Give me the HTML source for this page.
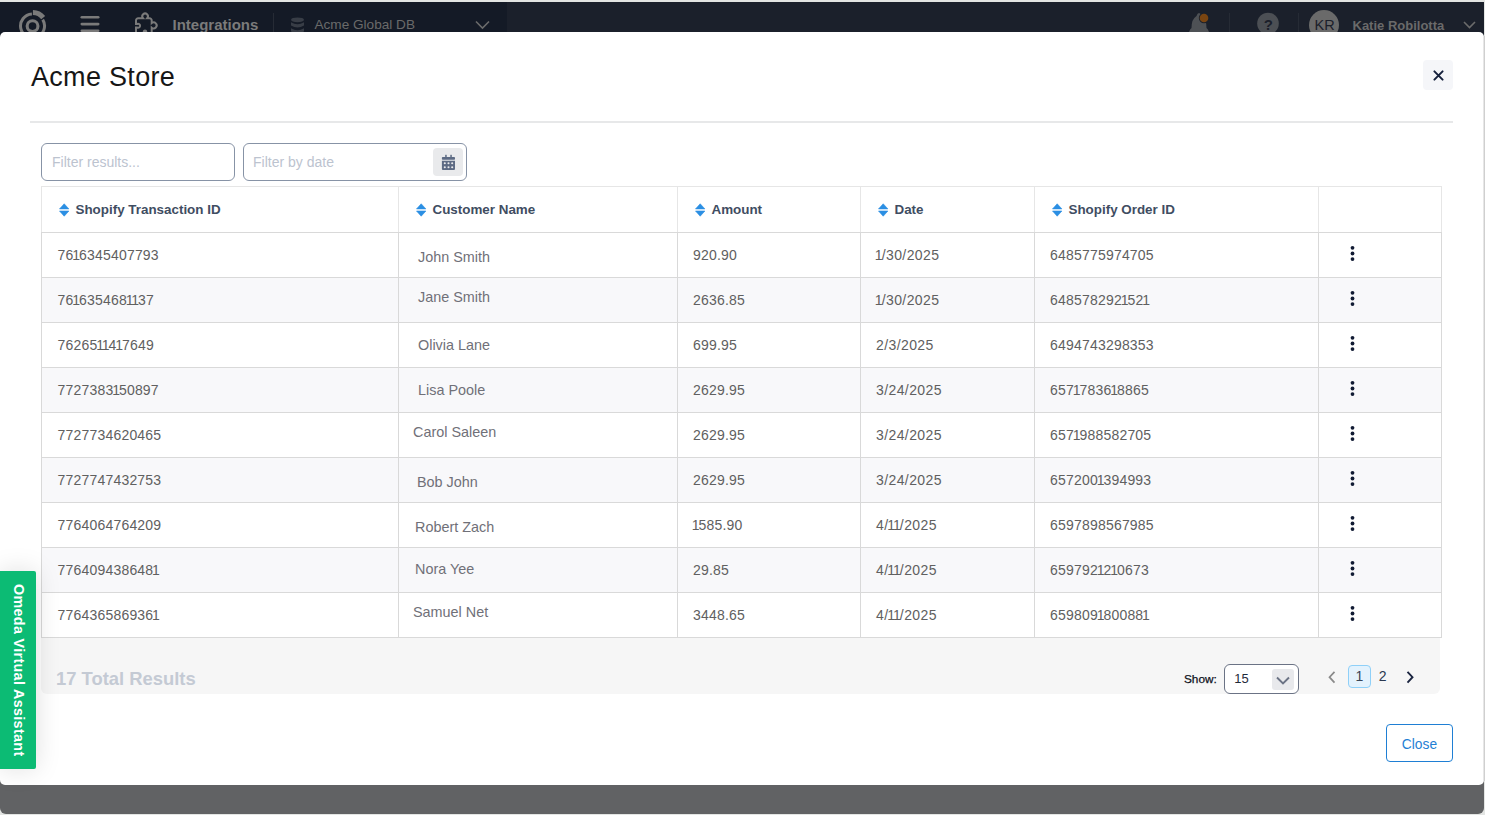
<!DOCTYPE html>
<html><head><meta charset="utf-8">
<style>
*{box-sizing:border-box;margin:0;padding:0}
html,body{width:1485px;height:815px;overflow:hidden;background:#e3e5e3;font-family:"Liberation Sans",sans-serif}
.a{position:absolute}
.t{position:absolute;white-space:nowrap}
.o{margin:0 -1.25px}
</style></head>
<body>
<div class="a" style="left:0;top:2px;width:1484px;height:40px;background:#141a26"></div>
<div class="a" style="left:507px;top:2px;width:977px;height:40px;background:#1b202b"></div>
<div class="a" style="left:0;top:760px;width:1483.6px;height:53.6px;background:#616264;border-radius:0 0 6px 6px"></div>
<svg class="a" style="left:0;top:0" width="1485" height="40">
 <g fill="none" stroke="#7a7a7a">
  <circle cx="32.55" cy="26.1" r="5.4" stroke-width="3.1"/>
  <path d="M 42.7 19.6 A 12 12 0 1 1 31.9 14.0" stroke-width="3"/>
  <path d="M 32.9 12.5 A 13.5 13.5 0 0 1 43.2 17.6" stroke-width="5"/>
 </g>
 <g fill="#7a7a7a">
  <rect x="80.5" y="16" width="19" height="2.6" rx="1.3"/>
  <rect x="80.5" y="22.8" width="19" height="2.6" rx="1.3"/>
  <rect x="80.5" y="29.5" width="19" height="2.6" rx="1.3"/>
 </g>
 <path d="M136 34 V27.6 h1.2 a2 2 0 1 0 0 -3.6 h-1.2 V20.4 a2.2 2.2 0 0 1 2.2 -2.2 H143 a2.8 2.8 0 1 1 4.2 0 h2.3 a2.2 2.2 0 0 1 2.2 2.2 V23.1 a3 3 0 1 1 0 4.6 V34" fill="none" stroke="#7a7a7a" stroke-width="2"/>
 <circle cx="145" cy="31.6" r="2.2" fill="#7a7a7a"/>
 <line x1="273.5" y1="13" x2="273.5" y2="40" stroke="#262b35" stroke-width="1"/>
 <g fill="#383d46">
  <ellipse cx="297.5" cy="19.8" rx="6.5" ry="2.4"/>
  <path d="M291 22.3 q6.5 4 13 0 v3.3 q-6.5 4 -13 0z"/>
  <path d="M291 28.2 q6.5 4 13 0 v3.3 q-6.5 4 -13 0z"/>
 </g>
 <path d="M476 21.5 l6.5 6.5 l6.5 -6.5" fill="none" stroke="#6b6b6b" stroke-width="1.6"/>
 <path d="M1189 32 q1 -3 2.5 -4 q0 -9 5 -12 q1 -3 2.5 -3 q1.5 0 2.5 3 q5 3 5 12 q1.5 1 2.5 4z" fill="#4e5155"/>
 <circle cx="1204" cy="18" r="5.2" fill="#1b202b"/>
 <circle cx="1204" cy="18" r="4.3" fill="#7a4511"/>
 <line x1="1229.5" y1="13" x2="1229.5" y2="40" stroke="#262b35" stroke-width="1"/>
 <circle cx="1268" cy="23.5" r="10.8" fill="#4c4f54"/>
 <line x1="1298.5" y1="13" x2="1298.5" y2="40" stroke="#262b35" stroke-width="1"/>
 <circle cx="1324" cy="25" r="15" fill="#6a6a6a"/>
 <path d="M1464 22 l5.5 5.5 l5.5 -5.5" fill="none" stroke="#6b6b6b" stroke-width="1.6"/>
</svg>
<div class="t" style="left:172.5px;top:16.90px;font-size:15px;line-height:15px;font-weight:bold;color:#7b7b7b">Integrations</div>
<div class="t" style="left:314.5px;top:18.29px;font-size:13.6px;line-height:13.6px;color:#6a6a6a">Acme Global DB</div>
<div class="t" style="left:1263.8px;top:16.90px;font-size:15px;line-height:15px;font-weight:bold;color:#1b202b">?</div>
<div class="t" style="left:1314.5px;top:17.73px;font-size:14.5px;line-height:14.5px;color:#1b202b">KR</div>
<div class="t" style="left:1352.5px;top:19.00px;font-size:13.0px;line-height:13.0px;font-weight:bold;color:#6a6a6a">Katie Robilotta</div>
<div class="a" style="left:0;top:32px;width:1483.6px;height:753px;background:#fff;border-radius:5px"></div>
<div class="t" style="left:31px;top:64.14px;font-size:27px;line-height:27px;color:#161616;letter-spacing:0.3px">Acme Store</div>
<div class="a" style="left:30px;top:121px;width:1423px;height:2px;background:#e7e8e9"></div>
<div class="a" style="left:1423px;top:60px;width:30px;height:30px;background:#f5f6f9;border-radius:4px"></div>
<svg class="a" style="left:1423px;top:60px" width="30" height="30"><path d="M11.4 11.4 L19.6 19.6 M19.6 11.4 L11.4 19.6" stroke="#15203c" stroke-width="2" stroke-linecap="round"/></svg>
<div class="a" style="left:41px;top:143px;width:194px;height:38px;border:1.5px solid #8793a6;border-radius:6px;background:#fff"></div>
<div class="t" style="left:52px;top:155.15px;font-size:14px;line-height:14px;color:#bcc3cf">Filter results...</div>
<div class="a" style="left:243px;top:143px;width:224px;height:38px;border:1.5px solid #8793a6;border-radius:6px;background:#fff"></div>
<div class="t" style="left:253px;top:155.15px;font-size:14px;line-height:14px;color:#bcc3cf">Filter by date</div>
<div class="a" style="left:433px;top:148px;width:30px;height:28px;background:#e9eaec;border-radius:4px"></div>
<svg class="a" style="left:433px;top:148px" width="30" height="28">
 <g fill="#5d6b84">
  <rect x="8.9" y="9" width="13.1" height="2.8" rx="0.8"/>
  <rect x="12.2" y="6.8" width="1.5" height="3"/>
  <rect x="17.3" y="6.8" width="1.5" height="3"/>
  <path d="M8.9 12.7 h13.1 v8.2 a1.1 1.1 0 0 1 -1.1 1.1 h-10.9 a1.1 1.1 0 0 1 -1.1 -1.1z"/>
 </g>
 <g fill="#e9eaec">
  <circle cx="11.8" cy="15.3" r="1.05"/><circle cx="15.5" cy="15.3" r="1.05"/><circle cx="19.2" cy="15.3" r="1.05"/>
  <circle cx="11.8" cy="19.3" r="1.05"/><circle cx="15.5" cy="19.3" r="1.05"/><circle cx="19.2" cy="19.3" r="1.05"/>
 </g>
</svg>
<div class="a" style="left:41px;top:186px;width:1401px;height:46px;border:1px solid #e6e6e6;border-bottom:none"></div>
<div class="a" style="left:41px;top:232px;width:1401px;height:46px;background:#fff;border:1px solid #d9d9d9;border-bottom:1px solid #d9d9d9"></div>
<div class="a" style="left:41px;top:277px;width:1401px;height:46px;background:#f8f8fa;border:1px solid #d9d9d9;border-bottom:1px solid #d9d9d9"></div>
<div class="a" style="left:41px;top:322px;width:1401px;height:46px;background:#fff;border:1px solid #d9d9d9;border-bottom:1px solid #d9d9d9"></div>
<div class="a" style="left:41px;top:367px;width:1401px;height:46px;background:#f8f8fa;border:1px solid #d9d9d9;border-bottom:1px solid #d9d9d9"></div>
<div class="a" style="left:41px;top:412px;width:1401px;height:46px;background:#fff;border:1px solid #d9d9d9;border-bottom:1px solid #d9d9d9"></div>
<div class="a" style="left:41px;top:457px;width:1401px;height:46px;background:#f8f8fa;border:1px solid #d9d9d9;border-bottom:1px solid #d9d9d9"></div>
<div class="a" style="left:41px;top:502px;width:1401px;height:46px;background:#fff;border:1px solid #d9d9d9;border-bottom:1px solid #d9d9d9"></div>
<div class="a" style="left:41px;top:547px;width:1401px;height:46px;background:#f8f8fa;border:1px solid #d9d9d9;border-bottom:1px solid #d9d9d9"></div>
<div class="a" style="left:41px;top:592px;width:1401px;height:46px;background:#fff;border:1px solid #d9d9d9;border-bottom:1px solid #d9d9d9"></div>
<div class="a" style="left:398px;top:186px;width:1px;height:46px;background:#e6e6e6"></div>
<div class="a" style="left:398px;top:232px;width:1px;height:406px;background:#d9d9d9"></div>
<div class="a" style="left:677px;top:186px;width:1px;height:46px;background:#e6e6e6"></div>
<div class="a" style="left:677px;top:232px;width:1px;height:406px;background:#d9d9d9"></div>
<div class="a" style="left:860px;top:186px;width:1px;height:46px;background:#e6e6e6"></div>
<div class="a" style="left:860px;top:232px;width:1px;height:406px;background:#d9d9d9"></div>
<div class="a" style="left:1034px;top:186px;width:1px;height:46px;background:#e6e6e6"></div>
<div class="a" style="left:1034px;top:232px;width:1px;height:406px;background:#d9d9d9"></div>
<div class="a" style="left:1318px;top:186px;width:1px;height:46px;background:#e6e6e6"></div>
<div class="a" style="left:1318px;top:232px;width:1px;height:406px;background:#d9d9d9"></div>
<svg class="a" style="left:59px;top:203px" width="11" height="15"><path d="M5.2 0.8 L9.9 5.9 H0.5Z M0.5 8.0 H9.9 L5.2 13.2Z" fill="#2b8fe3" stroke="#2b8fe3" stroke-width="0.6" stroke-linejoin="round"/></svg>
<div class="t" style="left:75.5px;top:202.66px;font-size:13.4px;line-height:13.4px;font-weight:bold;color:#3f4d62">Shopify Transaction ID</div>
<svg class="a" style="left:416px;top:203px" width="11" height="15"><path d="M5.2 0.8 L9.9 5.9 H0.5Z M0.5 8.0 H9.9 L5.2 13.2Z" fill="#2b8fe3" stroke="#2b8fe3" stroke-width="0.6" stroke-linejoin="round"/></svg>
<div class="t" style="left:432.5px;top:202.66px;font-size:13.4px;line-height:13.4px;font-weight:bold;color:#3f4d62">Customer Name</div>
<svg class="a" style="left:695px;top:203px" width="11" height="15"><path d="M5.2 0.8 L9.9 5.9 H0.5Z M0.5 8.0 H9.9 L5.2 13.2Z" fill="#2b8fe3" stroke="#2b8fe3" stroke-width="0.6" stroke-linejoin="round"/></svg>
<div class="t" style="left:711.5px;top:202.66px;font-size:13.4px;line-height:13.4px;font-weight:bold;color:#3f4d62">Amount</div>
<svg class="a" style="left:878px;top:203px" width="11" height="15"><path d="M5.2 0.8 L9.9 5.9 H0.5Z M0.5 8.0 H9.9 L5.2 13.2Z" fill="#2b8fe3" stroke="#2b8fe3" stroke-width="0.6" stroke-linejoin="round"/></svg>
<div class="t" style="left:894.5px;top:202.66px;font-size:13.4px;line-height:13.4px;font-weight:bold;color:#3f4d62">Date</div>
<svg class="a" style="left:1052px;top:203px" width="11" height="15"><path d="M5.2 0.8 L9.9 5.9 H0.5Z M0.5 8.0 H9.9 L5.2 13.2Z" fill="#2b8fe3" stroke="#2b8fe3" stroke-width="0.6" stroke-linejoin="round"/></svg>
<div class="t" style="left:1068.5px;top:202.66px;font-size:13.4px;line-height:13.4px;font-weight:bold;color:#3f4d62">Shopify Order ID</div>
<div class="t" style="left:57.5px;top:248.15px;font-size:14px;line-height:14px;color:#606060;letter-spacing:0.2px">76<span class="o">1</span>6345407793</div>
<div class="t" style="left:418px;top:249.81px;font-size:14.4px;line-height:14.4px;color:#707078">John Smith</div>
<div class="t" style="left:693px;top:248.15px;font-size:14px;line-height:14px;color:#606060;letter-spacing:0.2px">920.90</div>
<div class="t" style="left:876px;top:248.15px;font-size:14px;line-height:14px;color:#606060;letter-spacing:0.4px"><span class="o">1</span>/30/2025</div>
<div class="t" style="left:1050px;top:248.15px;font-size:14px;line-height:14px;color:#606060;letter-spacing:0.2px">6485775974705</div>
<svg class="a" style="left:1349px;top:245px" width="8" height="16"><g fill="#111b33"><circle cx="3.5" cy="2.8" r="1.9"/><circle cx="3.5" cy="8.5" r="1.9"/><circle cx="3.5" cy="14.1" r="1.9"/></g></svg>
<div class="t" style="left:57.5px;top:293.15px;font-size:14px;line-height:14px;color:#606060;letter-spacing:0.2px">76<span class="o">1</span>635468<span class="o">1</span><span class="o">1</span>37</div>
<div class="t" style="left:418px;top:289.81px;font-size:14.4px;line-height:14.4px;color:#707078">Jane Smith</div>
<div class="t" style="left:693px;top:293.15px;font-size:14px;line-height:14px;color:#606060;letter-spacing:0.2px">2636.85</div>
<div class="t" style="left:876px;top:293.15px;font-size:14px;line-height:14px;color:#606060;letter-spacing:0.4px"><span class="o">1</span>/30/2025</div>
<div class="t" style="left:1050px;top:293.15px;font-size:14px;line-height:14px;color:#606060;letter-spacing:0.2px">648578292<span class="o">1</span>52<span class="o">1</span></div>
<svg class="a" style="left:1349px;top:290px" width="8" height="16"><g fill="#111b33"><circle cx="3.5" cy="2.8" r="1.9"/><circle cx="3.5" cy="8.5" r="1.9"/><circle cx="3.5" cy="14.1" r="1.9"/></g></svg>
<div class="t" style="left:57.5px;top:338.15px;font-size:14px;line-height:14px;color:#606060;letter-spacing:0.2px">76265<span class="o">1</span><span class="o">1</span>4<span class="o">1</span>7649</div>
<div class="t" style="left:418px;top:337.81px;font-size:14.4px;line-height:14.4px;color:#707078">Olivia Lane</div>
<div class="t" style="left:693px;top:338.15px;font-size:14px;line-height:14px;color:#606060;letter-spacing:0.2px">699.95</div>
<div class="t" style="left:876px;top:338.15px;font-size:14px;line-height:14px;color:#606060;letter-spacing:0.4px">2/3/2025</div>
<div class="t" style="left:1050px;top:338.15px;font-size:14px;line-height:14px;color:#606060;letter-spacing:0.2px">6494743298353</div>
<svg class="a" style="left:1349px;top:335px" width="8" height="16"><g fill="#111b33"><circle cx="3.5" cy="2.8" r="1.9"/><circle cx="3.5" cy="8.5" r="1.9"/><circle cx="3.5" cy="14.1" r="1.9"/></g></svg>
<div class="t" style="left:57.5px;top:383.15px;font-size:14px;line-height:14px;color:#606060;letter-spacing:0.2px">7727383<span class="o">1</span>50897</div>
<div class="t" style="left:418px;top:382.81px;font-size:14.4px;line-height:14.4px;color:#707078">Lisa Poole</div>
<div class="t" style="left:693px;top:383.15px;font-size:14px;line-height:14px;color:#606060;letter-spacing:0.2px">2629.95</div>
<div class="t" style="left:876px;top:383.15px;font-size:14px;line-height:14px;color:#606060;letter-spacing:0.4px">3/24/2025</div>
<div class="t" style="left:1050px;top:383.15px;font-size:14px;line-height:14px;color:#606060;letter-spacing:0.2px">657<span class="o">1</span>7836<span class="o">1</span>8865</div>
<svg class="a" style="left:1349px;top:380px" width="8" height="16"><g fill="#111b33"><circle cx="3.5" cy="2.8" r="1.9"/><circle cx="3.5" cy="8.5" r="1.9"/><circle cx="3.5" cy="14.1" r="1.9"/></g></svg>
<div class="t" style="left:57.5px;top:428.15px;font-size:14px;line-height:14px;color:#606060;letter-spacing:0.2px">7727734620465</div>
<div class="t" style="left:413px;top:424.81px;font-size:14.4px;line-height:14.4px;color:#707078">Carol Saleen</div>
<div class="t" style="left:693px;top:428.15px;font-size:14px;line-height:14px;color:#606060;letter-spacing:0.2px">2629.95</div>
<div class="t" style="left:876px;top:428.15px;font-size:14px;line-height:14px;color:#606060;letter-spacing:0.4px">3/24/2025</div>
<div class="t" style="left:1050px;top:428.15px;font-size:14px;line-height:14px;color:#606060;letter-spacing:0.2px">657<span class="o">1</span>988582705</div>
<svg class="a" style="left:1349px;top:425px" width="8" height="16"><g fill="#111b33"><circle cx="3.5" cy="2.8" r="1.9"/><circle cx="3.5" cy="8.5" r="1.9"/><circle cx="3.5" cy="14.1" r="1.9"/></g></svg>
<div class="t" style="left:57.5px;top:473.15px;font-size:14px;line-height:14px;color:#606060;letter-spacing:0.2px">7727747432753</div>
<div class="t" style="left:417px;top:474.81px;font-size:14.4px;line-height:14.4px;color:#707078">Bob John</div>
<div class="t" style="left:693px;top:473.15px;font-size:14px;line-height:14px;color:#606060;letter-spacing:0.2px">2629.95</div>
<div class="t" style="left:876px;top:473.15px;font-size:14px;line-height:14px;color:#606060;letter-spacing:0.4px">3/24/2025</div>
<div class="t" style="left:1050px;top:473.15px;font-size:14px;line-height:14px;color:#606060;letter-spacing:0.2px">657200<span class="o">1</span>394993</div>
<svg class="a" style="left:1349px;top:470px" width="8" height="16"><g fill="#111b33"><circle cx="3.5" cy="2.8" r="1.9"/><circle cx="3.5" cy="8.5" r="1.9"/><circle cx="3.5" cy="14.1" r="1.9"/></g></svg>
<div class="t" style="left:57.5px;top:518.15px;font-size:14px;line-height:14px;color:#606060;letter-spacing:0.2px">7764064764209</div>
<div class="t" style="left:415px;top:519.81px;font-size:14.4px;line-height:14.4px;color:#707078">Robert Zach</div>
<div class="t" style="left:693px;top:518.15px;font-size:14px;line-height:14px;color:#606060;letter-spacing:0.2px"><span class="o">1</span>585.90</div>
<div class="t" style="left:876px;top:518.15px;font-size:14px;line-height:14px;color:#606060;letter-spacing:0.4px">4/<span class="o">1</span><span class="o">1</span>/2025</div>
<div class="t" style="left:1050px;top:518.15px;font-size:14px;line-height:14px;color:#606060;letter-spacing:0.2px">6597898567985</div>
<svg class="a" style="left:1349px;top:515px" width="8" height="16"><g fill="#111b33"><circle cx="3.5" cy="2.8" r="1.9"/><circle cx="3.5" cy="8.5" r="1.9"/><circle cx="3.5" cy="14.1" r="1.9"/></g></svg>
<div class="t" style="left:57.5px;top:563.15px;font-size:14px;line-height:14px;color:#606060;letter-spacing:0.2px">776409438648<span class="o">1</span></div>
<div class="t" style="left:415px;top:562.31px;font-size:14.4px;line-height:14.4px;color:#707078">Nora Yee</div>
<div class="t" style="left:693px;top:563.15px;font-size:14px;line-height:14px;color:#606060;letter-spacing:0.2px">29.85</div>
<div class="t" style="left:876px;top:563.15px;font-size:14px;line-height:14px;color:#606060;letter-spacing:0.4px">4/<span class="o">1</span><span class="o">1</span>/2025</div>
<div class="t" style="left:1050px;top:563.15px;font-size:14px;line-height:14px;color:#606060;letter-spacing:0.2px">659792<span class="o">1</span>2<span class="o">1</span>0673</div>
<svg class="a" style="left:1349px;top:560px" width="8" height="16"><g fill="#111b33"><circle cx="3.5" cy="2.8" r="1.9"/><circle cx="3.5" cy="8.5" r="1.9"/><circle cx="3.5" cy="14.1" r="1.9"/></g></svg>
<div class="t" style="left:57.5px;top:608.15px;font-size:14px;line-height:14px;color:#606060;letter-spacing:0.2px">776436586936<span class="o">1</span></div>
<div class="t" style="left:413px;top:604.81px;font-size:14.4px;line-height:14.4px;color:#707078">Samuel Net</div>
<div class="t" style="left:693px;top:608.15px;font-size:14px;line-height:14px;color:#606060;letter-spacing:0.2px">3448.65</div>
<div class="t" style="left:876px;top:608.15px;font-size:14px;line-height:14px;color:#606060;letter-spacing:0.4px">4/<span class="o">1</span><span class="o">1</span>/2025</div>
<div class="t" style="left:1050px;top:608.15px;font-size:14px;line-height:14px;color:#606060;letter-spacing:0.2px">659809<span class="o">1</span>80088<span class="o">1</span></div>
<svg class="a" style="left:1349px;top:605px" width="8" height="16"><g fill="#111b33"><circle cx="3.5" cy="2.8" r="1.9"/><circle cx="3.5" cy="8.5" r="1.9"/><circle cx="3.5" cy="14.1" r="1.9"/></g></svg>
<div class="a" style="left:41px;top:638px;width:1399px;height:56px;background:#f6f6f6;border-radius:0 0 6px 6px"></div>
<div class="t" style="left:56px;top:670.22px;font-size:18.4px;line-height:18.4px;font-weight:bold;color:#c4cad4">17 Total Results</div>
<div class="t" style="left:1184px;top:674.01px;font-size:11.8px;line-height:11.8px;color:#0d1020;-webkit-text-stroke:0.25px #0d1020">Show:</div>
<div class="a" style="left:1224px;top:664px;width:75px;height:30px;border:1.3px solid #6b7385;border-radius:6px;background:#fff"></div>
<div class="t" style="left:1234.3px;top:672.00px;font-size:13px;line-height:13px;color:#1f2a3a">15</div>
<div class="a" style="left:1272px;top:669px;width:22px;height:21px;background:#e8e9ec;border-radius:3px"></div>
<svg class="a" style="left:1272px;top:669px" width="22" height="21"><path d="M5 8.5 L11 14.5 L17 8.5" fill="none" stroke="#6b7385" stroke-width="1.9"/></svg>
<svg class="a" style="left:1320px;top:665px" width="110" height="25"><path d="M14.5 6.8 L9.5 12.2 L14.5 17.6" fill="none" stroke="#8a8a8a" stroke-width="1.7"/><path d="M87.5 6.8 L92.5 12.2 L87.5 17.6" fill="none" stroke="#1b2540" stroke-width="1.9"/></svg>
<div class="a" style="left:1348px;top:665px;width:23px;height:23px;background:#e3f2fd;border:1.2px solid #8fd0f8;border-radius:4px"></div>
<div class="t" style="left:1355.5px;top:669.15px;font-size:14px;line-height:14px;color:#3a4558">1</div>
<div class="t" style="left:1378.8px;top:669.15px;font-size:14px;line-height:14px;color:#2a3850">2</div>
<div class="a" style="left:1386px;top:724px;width:67px;height:38px;border:1.3px solid #1f7fd4;border-radius:4px"></div>
<div class="t" style="left:1401.8px;top:737.62px;font-size:13.8px;line-height:13.8px;color:#1f7fd4">Close</div>
<div class="a" style="left:0;top:571px;width:36px;height:198px;background:#0cbb74;border-radius:0 2px 2px 0;box-shadow:0 0 26px rgba(0,0,0,0.13)"></div>
<div class="t" style="left:0;top:571px;width:36px;height:198px;"><div style="position:absolute;left:36.6px;top:13.3px;transform-origin:0 0;transform:rotate(90deg);letter-spacing:0.35px;font-size:14.3px;line-height:36px;font-weight:bold;color:#fff;white-space:nowrap;padding-left:0">Omeda Virtual Assistant</div></div>
<div class="a" style="left:1483px;top:36px;width:2px;height:745px;background:linear-gradient(90deg,#f2f2f2,#c4c4c4)"></div>
</body></html>
